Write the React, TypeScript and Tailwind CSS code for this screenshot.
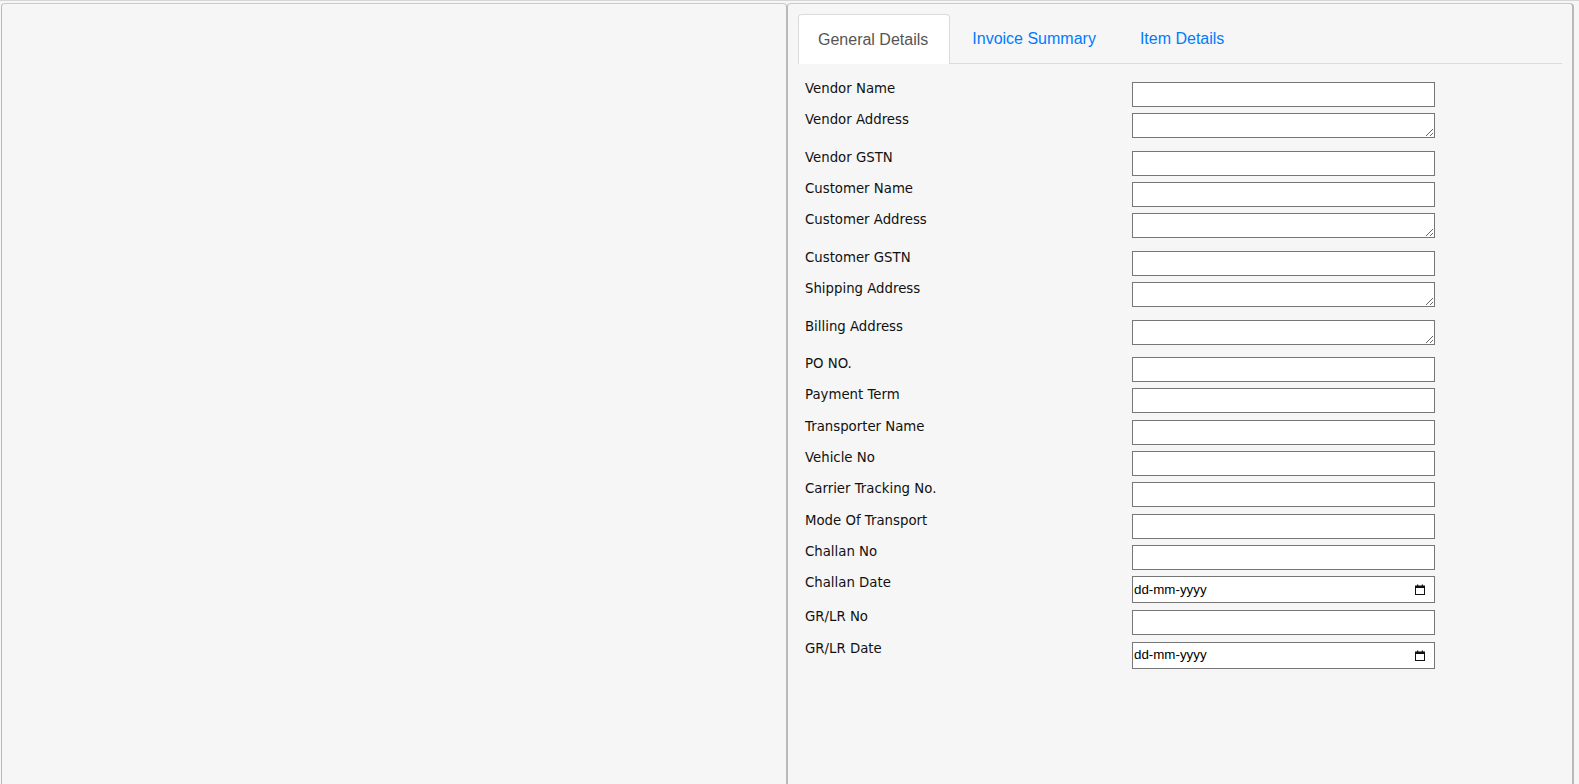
import React from "react";

type Field = { label: string; kind: "input" | "textarea" | "date" };

const fields: Field[] = [
  { label: "Vendor Name", kind: "input" },
  { label: "Vendor Address", kind: "textarea" },
  { label: "Vendor GSTN", kind: "input" },
  { label: "Customer Name", kind: "input" },
  { label: "Customer Address", kind: "textarea" },
  { label: "Customer GSTN", kind: "input" },
  { label: "Shipping Address", kind: "textarea" },
  { label: "Billing Address", kind: "textarea" },
  { label: "PO NO.", kind: "input" },
  { label: "Payment Term", kind: "input" },
  { label: "Transporter Name", kind: "input" },
  { label: "Vehicle No", kind: "input" },
  { label: "Carrier Tracking No.", kind: "input" },
  { label: "Mode Of Transport", kind: "input" },
  { label: "Challan No", kind: "input" },
  { label: "Challan Date", kind: "date" },
  { label: "GR/LR No", kind: "input" },
  { label: "GR/LR Date", kind: "date" },
];

function CalendarIcon() {
  return (
    <svg width="10" height="11" viewBox="0 0 10 11" className="block">
      <rect x="0.5" y="2" width="9" height="8.5" fill="none" stroke="#111" strokeWidth="1" />
      <rect x="0.5" y="2" width="9" height="2" fill="#111" />
      <rect x="2" y="0.5" width="1.2" height="2" fill="#111" />
      <rect x="6.8" y="0.5" width="1.2" height="2" fill="#111" />
    </svg>
  );
}

function Row({ f }: { f: Field }) {
  const h =
    f.kind === "textarea" ? "h-[37.5px]" : f.kind === "date" ? "h-[34px]" : "h-[31.3px]";
  return (
    <div className={`flex items-start ${h}`}>
      <div className="w-[327px] -mt-[1px] text-[13.3px] leading-[15px] text-[#111] font-['DejaVu_Sans',Verdana,sans-serif]">
        {f.label}
      </div>
      {f.kind === "input" && (
        <input
          type="text"
          className="w-[303px] h-[25px] border border-[#767676] bg-white outline-none"
        />
      )}
      {f.kind === "textarea" && (
        <textarea className="w-[303px] h-[25px] border border-[#767676] bg-white outline-none resize block" />
      )}
      {f.kind === "date" && (
        <div className="w-[303px] h-[27px] border border-[#767676] bg-white flex items-center justify-between pl-[1px] pr-[9px]">
          <span className="text-[13.33px] text-black font-['Liberation_Sans',Arial,sans-serif]">
            dd-mm-yyyy
          </span>
          <CalendarIcon />
        </div>
      )}
    </div>
  );
}

export default function App() {
  return (
    <div className="w-[1579px] h-[784px] overflow-hidden bg-[#f6f6f6] border-t border-[#d6d6d6] pt-[2px] flex">
      <div className="ml-[1px] w-[786px] h-[800px] border border-b-0 border-[#b9b9b9] border-t-[#c9c9c9] rounded-tl-[4px] rounded-tr-[4px] bg-[#f6f6f6]" />
      <div className="w-[787px] h-[800px] border border-b-0 border-r-2 border-[#b9b9b9] border-t-[#c9c9c9] rounded-tl-[4px] rounded-tr-[4px] bg-[#f6f6f6] px-[10px] pt-[10px]">
        <div className="flex border-b border-[#dcdcdc] h-[50px] font-['Liberation_Sans',Arial,sans-serif] text-[16px]">
          <div className="h-[50px] pl-[19px] pr-[21px] flex items-center bg-white border border-b-0 border-[#dcdcdc] rounded-t-[4px] text-[#555]">
            General Details
          </div>
          <div className="h-[50px] px-[20px] ml-[1px] flex items-center text-[#007bff] border border-transparent">
            Invoice Summary
          </div>
          <div className="h-[50px] px-[20px] ml-[2px] flex items-center text-[#007bff] border border-transparent">
            Item Details
          </div>
        </div>
        <div className="pl-[7px] pt-[18px]">
          {fields.map((f) => (
            <Row key={f.label} f={f} />
          ))}
        </div>
      </div>
    </div>
  );
}
